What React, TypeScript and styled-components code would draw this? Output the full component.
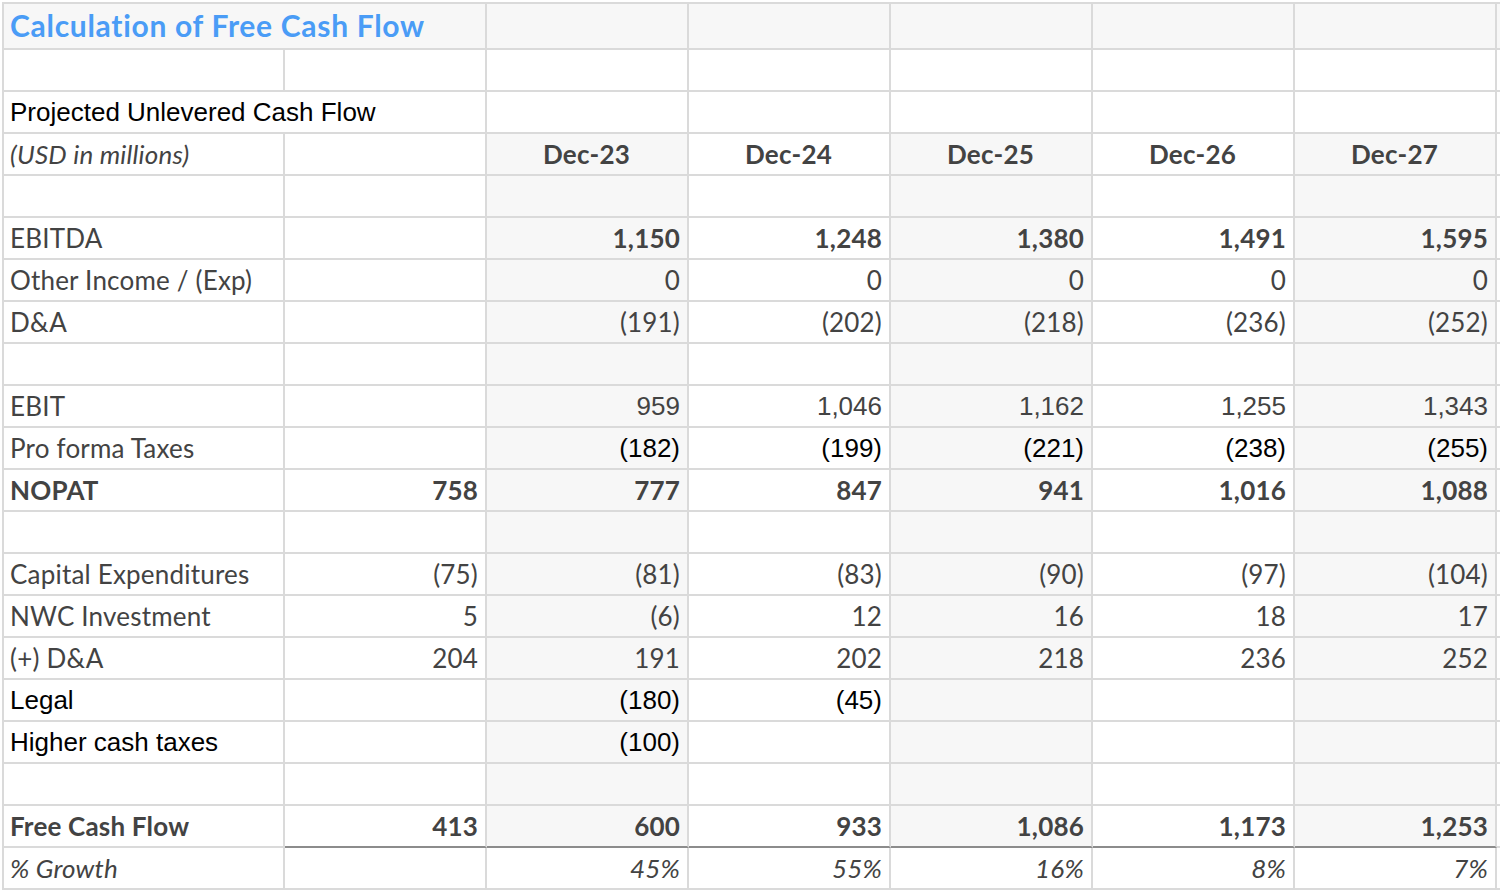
import React, { FC } from "react";
import styled, { createGlobalStyle } from "styled-components";

const GlobalStyle = createGlobalStyle`
  html, body {
    margin: 0;
    padding: 0;
    background: #fff;
    overflow: hidden;
  }
`;

const GRID = "#dadada";
const SHADE = "#f7f7f7";
const INK = "#434343";

const HUMAN = `"Lato", "Open Sans", sans-serif`;
const ARIAL = `"Liberation Sans", Arial, sans-serif`;

type Face = "human" | "arial";

const Sheet = styled.div`
  display: grid;
  grid-template-columns: 281px repeat(6, 202px) 60px;
  grid-auto-rows: 42px;
  grid-template-rows: 46px;
  margin: 2px 0 0 2px;
  border-left: 2px solid ${GRID};
  border-top: 2px solid ${GRID};
  width: max-content;
`;

const Cell = styled.div<{
  $span?: number;
  $shade?: boolean;
  $align?: "left" | "right" | "center";
  $face?: Face;
  $bold?: boolean;
  $italic?: boolean;
  $ink?: string;
  $rule?: boolean;
}>`
  box-sizing: border-box;
  grid-column: span ${(p) => p.$span ?? 1};
  display: flex;
  align-items: center;
  justify-content: ${(p) =>
    p.$align === "right" ? "flex-end" : p.$align === "center" ? "center" : "flex-start"};
  padding: 0 7px 0 6px;
  border-right: 2px solid ${GRID};
  border-bottom: 2px solid ${(p) => (p.$rule ? "#8c8c8c" : GRID)};
  background: ${(p) => (p.$shade ? SHADE : "#fff")};
  font-family: ${(p) => (p.$face === "arial" ? ARIAL : HUMAN)};
  font-size: 26px;
  letter-spacing: ${(p) => (p.$face === "arial" ? "0" : "0.2px")};
  font-weight: ${(p) => (p.$bold ? 700 : 400)};
  font-style: ${(p) => (p.$italic ? "italic" : "normal")};
  color: ${(p) => p.$ink ?? INK};
  white-space: nowrap;
  overflow: visible;
`;

const Title = styled(Cell)`
  color: #4a9cf6;
  font-size: 30px;
  letter-spacing: 0.7px;
  font-weight: 700;
  padding-bottom: 3px;
  background: ${SHADE};
`;

const Header = styled(Cell)`
  font-weight: 700;
  justify-content: center;
`;

interface Line {
  label: string;
  values?: string[]; // column B + five years
  face?: Face;
  valueFace?: Face;
  bold?: boolean;
  boldValues?: boolean;
  italic?: boolean;
  ink?: string;
  valueInk?: string;
  rule?: boolean;
  plain?: boolean; // no column shading
}

const YEARS = ["Dec-23", "Dec-24", "Dec-25", "Dec-26", "Dec-27"];

const lines: Line[] = [
  { label: "" },
  {
    label: "EBITDA",
    values: ["", "1,150", "1,248", "1,380", "1,491", "1,595"],
    boldValues: true,
  },
  { label: "Other Income / (Exp)", values: ["", "0", "0", "0", "0", "0"] },
  { label: "D&A", values: ["", "(191)", "(202)", "(218)", "(236)", "(252)"] },
  { label: "" },
  { label: "EBIT", values: ["", "959", "1,046", "1,162", "1,255", "1,343"], valueFace: "arial" },
  {
    label: "Pro forma Taxes",
    values: ["", "(182)", "(199)", "(221)", "(238)", "(255)"],
    valueFace: "arial",
    valueInk: "#000",
  },
  { label: "NOPAT", values: ["758", "777", "847", "941", "1,016", "1,088"], bold: true },
  { label: "" },
  { label: "Capital Expenditures", values: ["(75)", "(81)", "(83)", "(90)", "(97)", "(104)"] },
  { label: "NWC Investment", values: ["5", "(6)", "12", "16", "18", "17"] },
  { label: "(+) D&A", values: ["204", "191", "202", "218", "236", "252"] },
  {
    label: "Legal",
    values: ["", "(180)", "(45)", "", "", ""],
    face: "arial",
    valueFace: "arial",
    ink: "#000",
  },
  {
    label: "Higher cash taxes",
    values: ["", "(100)", "", "", "", ""],
    face: "arial",
    valueFace: "arial",
    ink: "#000",
  },
  { label: "" },
  {
    label: "Free Cash Flow",
    values: ["413", "600", "933", "1,086", "1,173", "1,253"],
    bold: true,
    rule: true,
  },
  {
    label: "% Growth",
    values: ["", "45%", "55%", "16%", "8%", "7%"],
    italic: true,
    plain: true,
  },
];

// Dec-23, Dec-25 and Dec-27 columns carry the light band
const banded = (col: number) => col === 1 || col === 3 || col === 5;

const App: FC = () => {
  return (
    <>
      <GlobalStyle />
      <Sheet>
        <Title $span={2}>Calculation of Free Cash Flow</Title>
        {[0, 1, 2, 3, 4, 5].map((i) => (
          <Cell key={`t${i}`} $shade />
        ))}

        {[0, 1, 2, 3, 4, 5, 6, 7].map((i) => (
          <Cell key={`e${i}`} />
        ))}

        <Cell $span={2} $face="arial" $ink="#000">
          Projected Unlevered Cash Flow
        </Cell>
        {[0, 1, 2, 3, 4, 5].map((i) => (
          <Cell key={`p${i}`} />
        ))}

        <Cell $italic>(USD in millions)</Cell>
        <Cell />
        {YEARS.map((y, i) => (
          <Header key={y} $shade={banded(i + 1)}>
            {y}
          </Header>
        ))}
        <Cell />

        {lines.map((line, r) => {
          const vals = line.values ?? ["", "", "", "", "", ""];
          return (
            <React.Fragment key={r}>
              <Cell
                $face={line.face}
                $bold={line.bold}
                $italic={line.italic}
                $ink={line.ink}
              >
                {line.label}
              </Cell>
              {vals.map((v, c) => (
                <Cell
                  key={c}
                  $align="right"
                  $shade={!line.plain && banded(c)}
                  $face={line.valueFace ?? line.face}
                  $bold={line.bold || line.boldValues}
                  $italic={line.italic}
                  $ink={line.valueInk ?? line.ink}
                  $rule={line.rule}
                >
                  {v}
                </Cell>
              ))}
              <Cell />
            </React.Fragment>
          );
        })}
      </Sheet>
    </>
  );
};

export default App;
